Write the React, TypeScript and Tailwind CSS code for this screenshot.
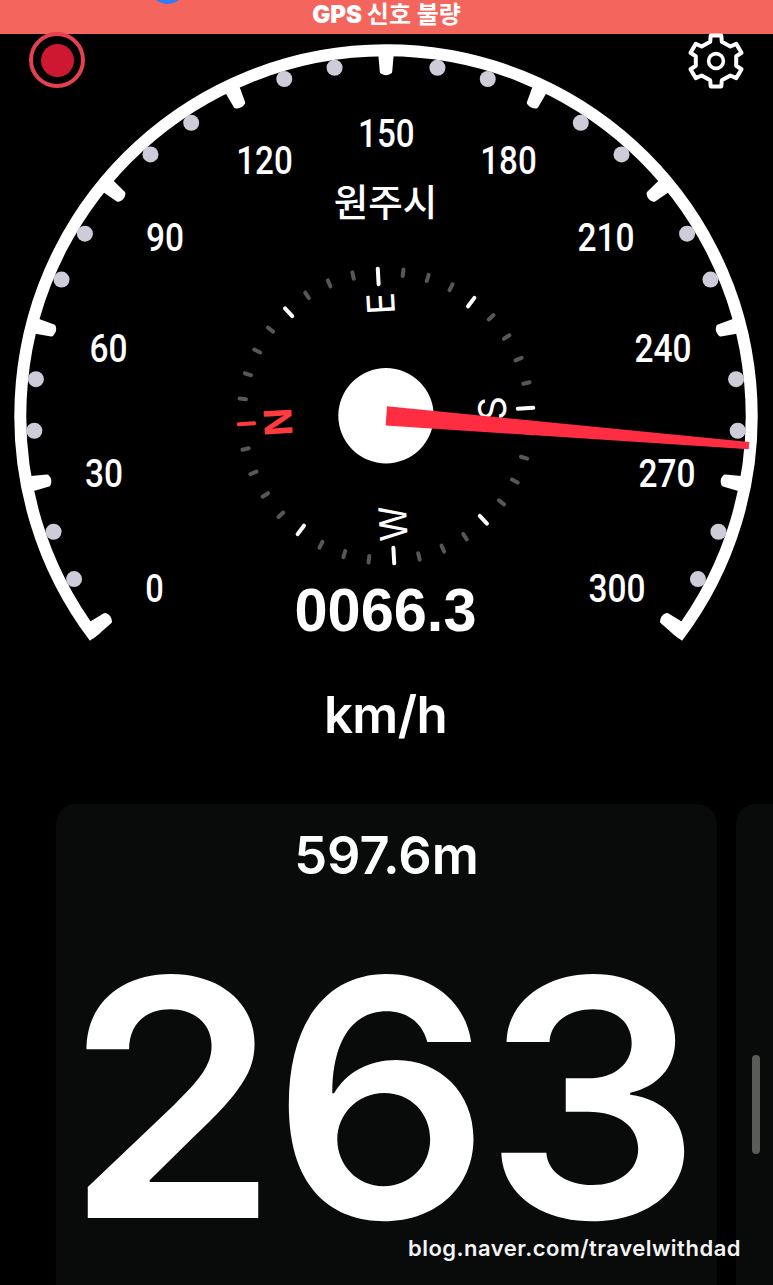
const CX = 386
const CY = 416
const STEP = 25.2

const LABELS = [
  { text: "0", x: 154.5, y: 602.3, w: 18.5 },
  { text: "30", x: 104, y: 487.2, w: 38 },
  { text: "60", x: 108.5, y: 362.2, w: 38 },
  { text: "90", x: 165, y: 250.7, w: 38 },
  { text: "120", x: 264.5, y: 174.2, w: 56.5 },
  { text: "150", x: 386.3, y: 147.2, w: 56.5 },
  { text: "180", x: 508.5, y: 174.2, w: 56.5 },
  { text: "210", x: 606, y: 250.7, w: 57 },
  { text: "240", x: 663, y: 362.2, w: 57 },
  { text: "270", x: 667, y: 487.2, w: 57 },
  { text: "300", x: 617, y: 602.3, w: 57 },
]

const LETTERS = [
  { text: "N", x: 278, y: 422, fill: "#ff3b40", weight: 700, w: 28 },
  { text: "E", x: 380.5, y: 303.5, fill: "#fff", weight: 400, w: 22 },
  { text: "S", x: 492, y: 408.5, fill: "#fff", weight: 400, w: 24 },
  { text: "W", x: 393, y: 523.5, fill: "#fff", weight: 400, w: 35 },
]

const polar = (r: number, deg: number) => {
  const a = (deg * Math.PI) / 180
  return [CX + r * Math.sin(a), CY - r * Math.cos(a)]
}

const Arc = () => {
  const [x1, y1] = polar(365.7, -127.2)
  const [x2, y2] = polar(365.7, 127.2)
  return (
    <path
      d={`M${x1} ${y1}A365.7 365.7 0 1 1 ${x2} ${y2}`}
      fill="none"
      stroke="#fff"
      strokeWidth="12"
    />
  )
}

const Scale = () => (
  <g>
    {LABELS.map((label, i) => {
      const angle = (i - 5) * STEP
      return (
        <g key={label.text}>
          <path
            d="M378 48H394L393.6 56L392.2 71.8Q392 73.2 390.8 73.8Q386 76.6 381.2 73.8Q380 73.2 379.8 71.8L378.4 56Z"
            fill="#fff"
            transform={`rotate(${angle} ${CX} ${CY})`}
          />
          {i < 10 &&
            [1, 2].map((n) => {
              const [x, y] = polar(352, angle + (n * STEP) / 3)
              return <circle key={n} cx={x} cy={y} r="8" fill="#cfccd9" />
            })}
        </g>
      )
    })}
    {LABELS.map((label) => (
      <text
        key={label.text}
        x={label.x}
        y={label.y}
        textAnchor="middle"
        textLength={label.w}
        lengthAdjust="spacingAndGlyphs"
        fill="#fff"
        className="font-['Roboto',sans-serif] text-[39.5px] font-medium"
      >
        {label.text}
      </text>
    ))}
  </g>
)

const Compass = () => (
  <g>
    {Array.from({ length: 36 }, (_, i) => {
      const deg = i * 10
      const cardinal = deg % 90 === 0
      const diagonal = [50, 130, 230, 310].includes(deg)
      const [x1, y1] = polar(147.5, deg - 93.2)
      const [x2, y2] = polar(cardinal ? 132 : diagonal ? 137 : 141, deg - 93.2)
      return (
        <line
          key={deg}
          x1={x1}
          y1={y1}
          x2={x2}
          y2={y2}
          stroke={deg === 0 ? "#ff3b40" : cardinal || diagonal ? "#fff" : "#575757"}
          strokeWidth="4"
          strokeLinecap="round"
        />
      )
    })}
    {LETTERS.map((l) => (
      <text
        key={l.text}
        transform={`translate(${l.x} ${l.y}) rotate(-93.2)`}
        y="13.8"
        textAnchor="middle"
        textLength={l.w}
        lengthAdjust="spacingAndGlyphs"
        fill={l.fill}
        fontWeight={l.weight}
        className="font-['Inter',sans-serif] text-[38px]"
      >
        {l.text}
      </text>
    ))}
  </g>
)

const GearIcon = () => {
  const points = Array.from({ length: 6 }, (_, k) => {
    const a = (k * Math.PI) / 3
    return [
      [-5.6, -19.2],
      [-5.1, -25.4],
      [5.1, -25.4],
      [5.6, -19.2],
    ].map(([x, y]) =>
      [
        1.04 * (x * Math.cos(a) - y * Math.sin(a)),
        x * Math.sin(a) + y * Math.cos(a),
      ].join(",")
    )
  })
  return (
    <svg viewBox="-30 -30 60 60" className="h-[60px] w-[60px]">
      <polygon
        points={points.flat().join(" ")}
        fill="none"
        stroke="#fff"
        strokeWidth="4"
        strokeLinejoin="round"
      />
      <circle r="7.4" fill="none" stroke="#fff" strokeWidth="3.6" />
    </svg>
  )
}

const App: React.FC = () => {
  return (
    <div className="relative flex h-[1285px] w-[773px] flex-col overflow-hidden bg-black text-white">
      <header className="relative flex h-[34px] shrink-0 justify-center overflow-hidden bg-[#f4655d]">
        <span className="absolute -top-[33px] left-[149px] h-[37px] w-[37px] rounded-full bg-[#2f7cf6]" />
        <p className="font-['Inter','Noto_Sans_CJK_KR',sans-serif] text-[24px] leading-[29px] font-black whitespace-nowrap">
          GPS <span className="font-bold">신호 불량</span>
        </p>
      </header>

      <div className="absolute top-[31px] left-0 flex w-full justify-between pr-[27px] pl-[29px]">
        <button className="mt-[1px] flex h-14 w-14 items-center justify-center rounded-full border-4 border-[#e5404f]">
          <span className="h-[33px] w-[33px] rounded-full bg-[#ce1730]" />
        </button>
        <button>
          <GearIcon />
        </button>
      </div>

      <svg viewBox="0 34 773 616" className="h-[616px] w-[773px] shrink-0">
        <Arc />
        <Scale />
        <text
          x="385.5"
          y="215.5"
          textAnchor="middle"
          fill="#fff"
          className="font-['Noto_Sans_CJK_KR',sans-serif] text-[37.5px] font-medium"
        >
          원주시
        </text>
        <Compass />
        <circle cx={CX} cy="415.8" r="47.7" fill="#fff" />
        <path d="M387 406.3L749.3 441.9L748.7 449.3L385.7 425.5Z" fill="#ff2d42" />
        <text
          x="385.5"
          y="631.3"
          textAnchor="middle"
          textLength="182"
          lengthAdjust="spacingAndGlyphs"
          fill="#fff"
          className="font-['Liberation_Sans',sans-serif] text-[60.5px] font-bold"
        >
          0066.3
        </text>
      </svg>

      <p className="h-[154px] shrink-0 pt-[34px] pr-[2px] text-center font-['Inter',sans-serif] text-[51px] leading-[62px] font-[560] tracking-[-0.6px]">
        km/h
      </p>

      <main className="flex flex-1 gap-[19px] pl-14">
        <section className="flex w-[661px] shrink-0 flex-col items-center rounded-t-[20px] bg-[#090b0a] pt-5">
          <p className="font-['Inter',sans-serif] text-[52.3px] leading-[62px] font-semibold">597.6m</p>
          <p className="mt-[62px] mr-[13px] scale-x-[1.035] font-['Inter',sans-serif] text-[331px] leading-[300px] font-[560] tracking-[-7px]">
            263
          </p>
        </section>
        <section className="w-[200px] shrink-0 rounded-tl-[20px] bg-[#090b0a] pt-[251px] pl-4">
          <div className="h-[99px] w-2 rounded-full bg-[#5b5c5a]" />
        </section>
      </main>

      <p className="absolute right-[32px] bottom-[23px] font-['Inter',sans-serif] text-[22px] leading-[28px] font-semibold tracking-[0.5px] text-[#f4f4f4]">
        blog.naver.com/travelwithdad
      </p>
    </div>
  )
}

export default App
